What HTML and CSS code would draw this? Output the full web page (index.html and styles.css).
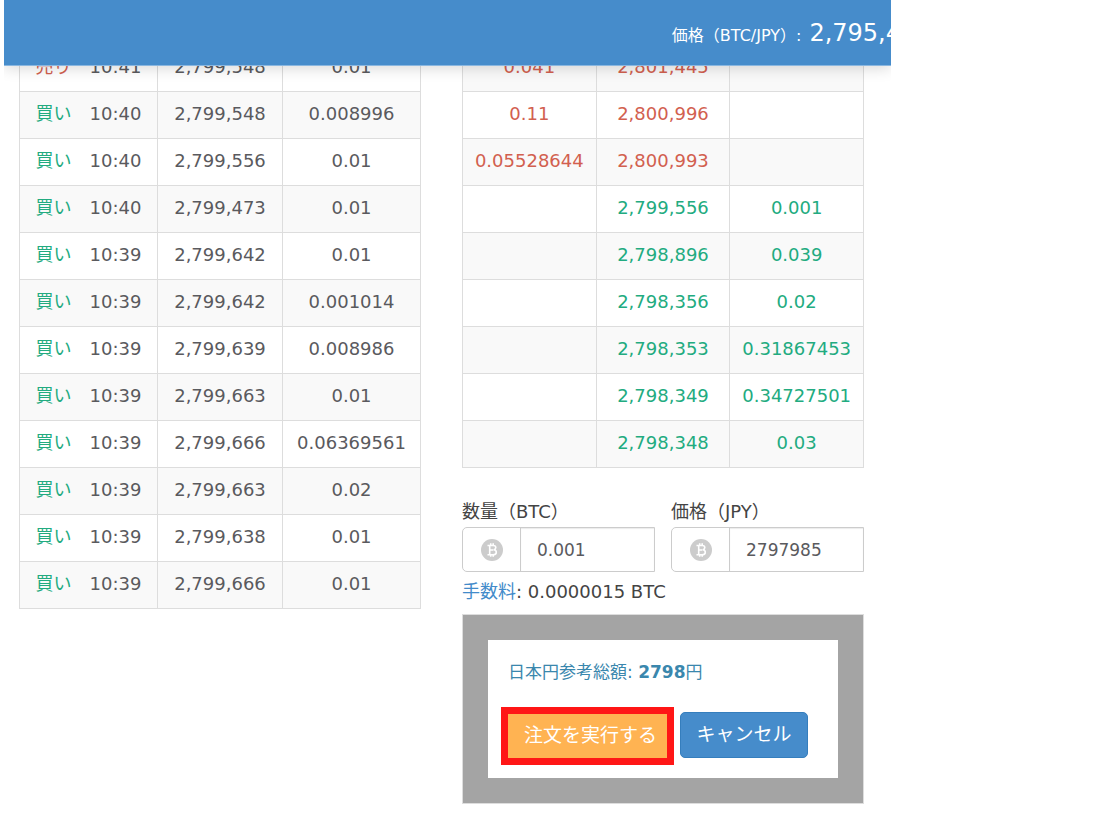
FILE: index.html
```
<!DOCTYPE html>
<html lang="ja">
<head>
<meta charset="utf-8">
<title>BTC/JPY</title>
<link rel="stylesheet" href="styles.css">
</head>
<body>
<div class="page">
<header class="topbar"><div class="ticker">価格（BTC/JPY）: <span class="ticker-price">2,795,4</span></div></header>
<main class="content">
<section>
<table class="grid trades">
<colgroup><col class="col-time"><col class="col-price"><col class="col-amount"></colgroup>
<tbody>
<tr><td><span class="side sell">売り</span>10:41</td><td>2,799,548</td><td>0.01</td></tr>
<tr><td><span class="side buy">買い</span>10:40</td><td>2,799,548</td><td>0.008996</td></tr>
<tr><td><span class="side buy">買い</span>10:40</td><td>2,799,556</td><td>0.01</td></tr>
<tr><td><span class="side buy">買い</span>10:40</td><td>2,799,473</td><td>0.01</td></tr>
<tr><td><span class="side buy">買い</span>10:39</td><td>2,799,642</td><td>0.01</td></tr>
<tr><td><span class="side buy">買い</span>10:39</td><td>2,799,642</td><td>0.001014</td></tr>
<tr><td><span class="side buy">買い</span>10:39</td><td>2,799,639</td><td>0.008986</td></tr>
<tr><td><span class="side buy">買い</span>10:39</td><td>2,799,663</td><td>0.01</td></tr>
<tr><td><span class="side buy">買い</span>10:39</td><td>2,799,666</td><td>0.06369561</td></tr>
<tr><td><span class="side buy">買い</span>10:39</td><td>2,799,663</td><td>0.02</td></tr>
<tr><td><span class="side buy">買い</span>10:39</td><td>2,799,638</td><td>0.01</td></tr>
<tr><td><span class="side buy">買い</span>10:39</td><td>2,799,666</td><td>0.01</td></tr>
</tbody>
</table>
</section>
<section>
<table class="grid book">
<tbody>
<tr class="sell"><td>0.041</td><td>2,801,445</td><td></td></tr>
<tr class="sell"><td>0.11</td><td>2,800,996</td><td></td></tr>
<tr class="sell"><td>0.05528644</td><td>2,800,993</td><td></td></tr>
<tr class="buy"><td></td><td>2,799,556</td><td>0.001</td></tr>
<tr class="buy"><td></td><td>2,798,896</td><td>0.039</td></tr>
<tr class="buy"><td></td><td>2,798,356</td><td>0.02</td></tr>
<tr class="buy"><td></td><td>2,798,353</td><td>0.31867453</td></tr>
<tr class="buy"><td></td><td>2,798,349</td><td>0.34727501</td></tr>
<tr class="buy"><td></td><td>2,798,348</td><td>0.03</td></tr>
</tbody>
</table>
<form class="order">
<div class="fields">
<div class="field">
<label for="amount">数量（BTC）</label>
<div class="input-group">
<span class="addon"><svg class="coin" viewBox="0 0 22 22" aria-hidden="true"><circle cx="11" cy="11" r="11" fill="#ccc"/><path d="M6.5 6.5h5.7q2.6 0 2.6 2.1 0 1.8-2 2.2 2.5.3 2.5 2.4 0 2.6-3.2 2.6H6.5M8.7 6.5v9.3M8.7 11h3.6M9.7 4.3v2.2M12.2 4.3v2.2M9.7 15.5v2.3M12.2 15.5v2.3" fill="none" stroke="#fff" stroke-width="1.6"/></svg></span>
<input id="amount" type="text" value="0.001">
</div>
</div>
<div class="field">
<label for="price">価格（JPY）</label>
<div class="input-group">
<span class="addon"><svg class="coin" viewBox="0 0 22 22" aria-hidden="true"><circle cx="11" cy="11" r="11" fill="#ccc"/><path d="M6.5 6.5h5.7q2.6 0 2.6 2.1 0 1.8-2 2.2 2.5.3 2.5 2.4 0 2.6-3.2 2.6H6.5M8.7 6.5v9.3M8.7 11h3.6M9.7 4.3v2.2M12.2 4.3v2.2M9.7 15.5v2.3M12.2 15.5v2.3" fill="none" stroke="#fff" stroke-width="1.6"/></svg></span>
<input id="price" type="text" value="2797985">
</div>
</div>
</div>
<p class="fee"><a href="#fee">手数料</a>: 0.0000015 BTC</p>
<div class="confirm">
<div class="confirm-box">
<p class="total">日本円参考総額: <strong>2798</strong>円</p>
<div class="actions">
<button class="btn btn-execute" type="submit">注文を実行する</button>
<button class="btn btn-cancel" type="button">キャンセル</button>
</div>
</div>
</div>
</form>
</section>
</main>
</div>
</body>
</html>
```
FILE: styles.css
```
* { box-sizing: border-box; }
body {
  margin: 0;
  background: #fff;
  color: #5a5a5e;
  font: 18px/26px "DejaVu Sans", "Noto Sans CJK JP", sans-serif;
}
p { margin: 0; }
.page {
  position: relative;
  margin: 0 205px 0 4px;
  overflow: hidden;
}
.topbar {
  position: absolute;
  top: 0;
  left: 0;
  right: 0;
  height: 66px;
  background: #468ccb;
  border-bottom: 1px solid #8ab7e0;
  box-shadow: 0 2px 14px rgba(0, 0, 0, 0.16);
}
.ticker {
  display: flex;
  align-items: baseline;
  justify-content: flex-end;
  gap: 8px;
  height: 100%;
  padding-top: 16px;
  margin-right: -10px;
  color: #fff;
  font-size: 16px;
  line-height: 34px;
  white-space: nowrap;
}
.ticker-price { font-size: 24px; }
.content {
  display: grid;
  grid-template-columns: minmax(0, 1fr) minmax(0, 1fr);
  gap: 41px;
  padding: 44px 27px 26px 15px;
}
.grid {
  width: 100%;
  border-collapse: collapse;
  table-layout: fixed;
}
.col-time { width: 138px; }
.col-price { width: 125px; }
.grid td {
  height: 47px;
  padding: 0 0 2px;
  border: 1px solid #ddd;
  text-align: center;
  white-space: nowrap;
}
.trades tr:nth-child(even), .book tr:nth-child(odd) { background: #f9f9f9; }
.side { margin-right: 18px; }
.sell { color: #d2604f; }
.buy { color: #22ab80; }
.fields {
  display: grid;
  grid-template-columns: minmax(0, 1fr) minmax(0, 1fr);
  gap: 16px;
  margin-top: 31px;
}
.field label {
  display: block;
  color: #444;
  margin-bottom: 2px;
}
.input-group {
  display: flex;
  height: 45px;
  border: 1px solid #ccc;
  border-radius: 5px 0 0 5px;
}
.addon {
  display: flex;
  flex: none;
  align-items: center;
  justify-content: center;
  width: 58px;
  border-right: 1px solid #ccc;
}
.coin { width: 22px; height: 22px; }
.input-group input {
  flex: 1;
  min-width: 0;
  padding: 0 16px;
  border: 0;
  background: #fff;
  box-shadow: inset 0 1px 1px rgba(0, 0, 0, 0.08);
  color: #5a5a5e;
  font: inherit;
  font-size: 17px;
}
.fee {
  margin: 7px 0 9px;
  color: #444;
}
.fee a { color: #428bca; text-decoration: none; }
.confirm {
  padding: 25px;
  background: #a4a4a4;
  border: 1px solid #ddd;
}
.confirm-box {
  padding: 19px 20px 20px;
  background: #fff;
}
.total {
  color: #3a87ad;
  font-size: 17px;
}
.actions {
  display: flex;
  align-items: flex-end;
  gap: 13px;
  margin-top: 27px;
}
.btn {
  padding: 0 0 2px;
  border: 0;
  color: #fff;
  font: 19px/26px "DejaVu Sans", "Noto Sans CJK JP", sans-serif;
  white-space: nowrap;
}
.btn-execute {
  width: 159px;
  height: 44px;
  padding-left: 6px;
  background: #ffb352;
  box-shadow: 0 0 0 7px #ff1616;
}
.btn-cancel {
  width: 128px;
  height: 46px;
  border: 1px solid #357ebd;
  border-radius: 5px;
  background: #468ccb;
}
```
